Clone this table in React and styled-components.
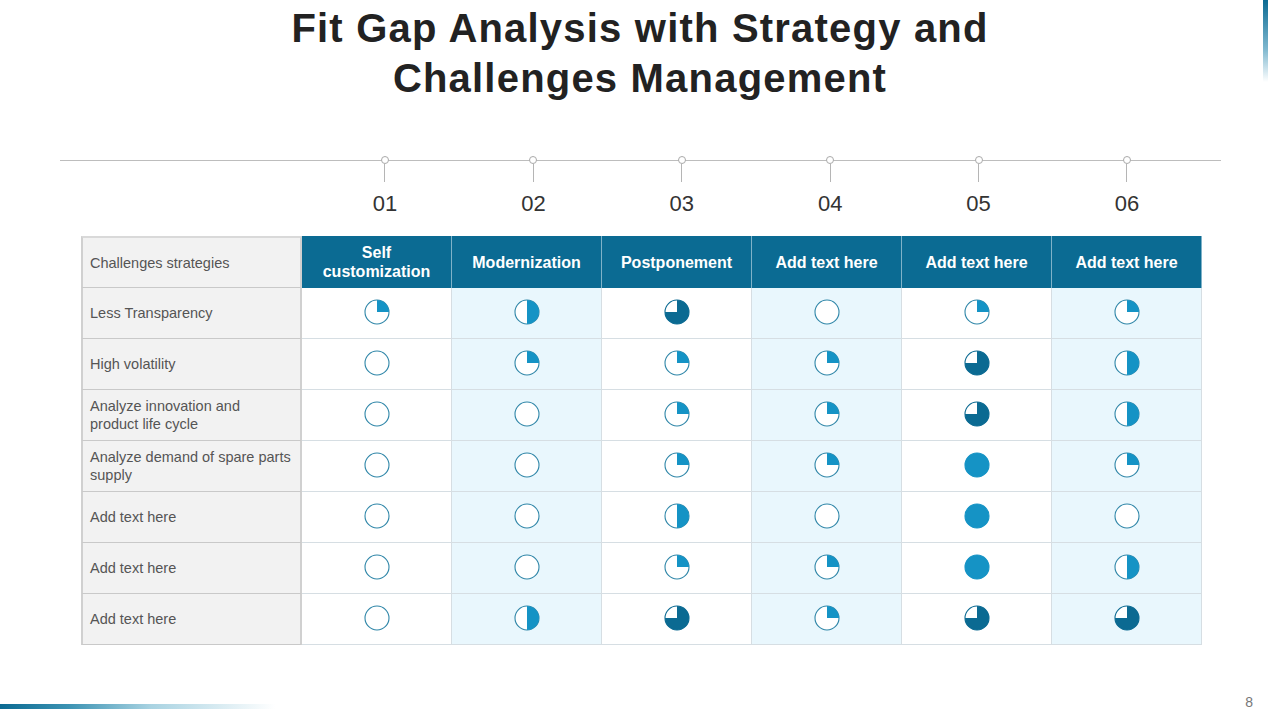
import React from "react";
import styled, { createGlobalStyle } from "styled-components";

const GlobalStyle = createGlobalStyle`
  * { box-sizing: border-box; }
  body {
    margin: 0;
    background: #ffffff;
    font-family: "Liberation Sans", Arial, sans-serif;
  }
`;

const columns = [
  "Self customization",
  "Modernization",
  "Postponement",
  "Add text here",
  "Add text here",
  "Add text here",
];

// 0 empty, 1 quarter, 2 half, 3 three quarters, 4 full
const rows = [
  { label: "Less Transparency", balls: [1, 2, 3, 0, 1, 1] },
  { label: "High volatility", balls: [0, 1, 1, 1, 3, 2] },
  { label: "Analyze innovation and\nproduct life cycle", balls: [0, 0, 1, 1, 3, 2] },
  { label: "Analyze demand of spare parts\nsupply", balls: [0, 0, 1, 1, 4, 1] },
  { label: "Add text here", balls: [0, 0, 2, 0, 4, 0] },
  { label: "Add text here", balls: [0, 0, 1, 1, 4, 2] },
  { label: "Add text here", balls: [0, 2, 3, 1, 3, 3] },
];

const HarveyBall = ({ level }) => {
  const c = 13;
  const r = 12;
  const dark = level === 3;
  const fill = dark ? "#0b6a92" : "#1593c5";
  const stroke = dark ? "#0b6a92" : level === 4 ? "#1593c5" : "#2f86a8";
  let sector = null;
  if (level === 1) sector = `M${c} ${c} L${c} ${c - r} A${r} ${r} 0 0 1 ${c + r} ${c} Z`;
  if (level === 2) sector = `M${c} ${c - r} A${r} ${r} 0 0 1 ${c} ${c + r} Z`;
  if (level === 3) sector = `M${c} ${c} L${c} ${c - r} A${r} ${r} 0 1 1 ${c - r} ${c} Z`;
  return (
    <svg width="26" height="26" viewBox="0 0 26 26">
      <circle cx={c} cy={c} r={r} fill={level === 4 ? fill : "#ffffff"} stroke={stroke} strokeWidth="1.1" />
      {sector && <path d={sector} fill={fill} />}
    </svg>
  );
};

const Page = styled.div`
  position: relative;
  width: 1280px;
  height: 720px;
  overflow: hidden;
  background: #ffffff;
`;

const Title = styled.h1`
  margin: 0;
  padding-top: 3px;
  text-align: center;
  font-family: "Liberation Sans", Arial, sans-serif;
  font-weight: 700;
  font-size: 40px;
  line-height: 50px;
  letter-spacing: 1.2px;
  color: #222222;
`;

const Timeline = styled.div`
  margin: 53px 0 0 60px;
  width: 1161px;
  background: linear-gradient(#bdbdbd, #bdbdbd) no-repeat 0 4px / 100% 1px;
  display: grid;
  grid-template-columns: repeat(6, 148.4px);
  padding-left: 250.8px;
`;

const Node = styled.div`
  display: flex;
  flex-direction: column;
  align-items: center;
`;

const Dot = styled.span`
  width: 8px;
  height: 8px;
  border-radius: 50%;
  border: 1px solid #a9a9a9;
  background: #ffffff;
`;

const Tick = styled.span`
  width: 1px;
  height: 18px;
  background: #b5b5b5;
`;

const Num = styled.span`
  margin-top: 9px;
  font-size: 22px;
  line-height: 26px;
  color: #333333;
`;

const Table = styled.div`
  margin: 19px 0 0 81px;
  width: 1121px;
  display: grid;
  grid-template-columns: 221px repeat(6, 150px);
  grid-template-rows: 52px repeat(7, 51px);
`;

const LabelCell = styled.div`
  display: flex;
  align-items: center;
  padding: 0 6px 0 7px;
  background: #f2f2f2;
  color: #555555;
  font-size: 14.5px;
  line-height: 18px;
  white-space: pre-line;
  border-left: 2px solid #d0d0d0;
  border-right: 2px solid #d0d0d0;
  border-bottom: 1px solid #c9c9c9;
  border-top: ${(p) => (p.$top ? "2px solid #d9d9d9" : "none")};
`;

const HeadCell = styled.div`
  display: flex;
  align-items: center;
  justify-content: center;
  text-align: center;
  padding: 0 10px;
  background: #0b6b93;
  color: #ffffff;
  font-weight: 700;
  font-size: 16px;
  line-height: 19px;
  border-right: 1px solid #7fb2c8;
`;

const BallCell = styled.div`
  display: flex;
  align-items: center;
  justify-content: center;
  background: ${(p) => (p.$tint ? "#e9f7fd" : "#ffffff")};
  border-right: 1px solid #d6dee3;
  border-bottom: 1px solid #d6dee3;
  padding-bottom: 3px;
`;

const SideBar = styled.div`
  position: absolute;
  top: 0;
  right: 12px;
  width: 5px;
  height: 82px;
  background: linear-gradient(#0b6a92, #7fb8cf 60%, rgba(255, 255, 255, 0));
`;

const FootBar = styled.div`
  position: absolute;
  left: 0;
  top: 704px;
  width: 275px;
  height: 5px;
  background: linear-gradient(90deg, #0b6a92, #3c93b3 25%, #a9d3e2 55%, rgba(255, 255, 255, 0));
`;

const PageNum = styled.span`
  position: absolute;
  right: 27px;
  top: 694px;
  font-size: 14px;
  color: #777777;
`;

export default function App() {
  return (
    <Page>
      <GlobalStyle />
      <SideBar />
      <Title>
        Fit Gap Analysis with Strategy and
        <br />
        Challenges Management
      </Title>
      <Timeline>
        {columns.map((_, i) => (
          <Node key={i}>
            <Dot />
            <Tick />
            <Num>{String(i + 1).padStart(2, "0")}</Num>
          </Node>
        ))}
      </Timeline>
      <Table>
        <LabelCell $top>Challenges strategies</LabelCell>
        {columns.map((col, i) => (
          <HeadCell key={i}>{col}</HeadCell>
        ))}
        {rows.map((row, ri) => (
          <React.Fragment key={ri}>
            <LabelCell>{row.label}</LabelCell>
            {row.balls.map((level, ci) => (
              <BallCell key={ci} $tint={ci % 2 === 1}>
                <HarveyBall level={level} />
              </BallCell>
            ))}
          </React.Fragment>
        ))}
      </Table>
      <FootBar />
      <PageNum>8</PageNum>
    </Page>
  );
}
